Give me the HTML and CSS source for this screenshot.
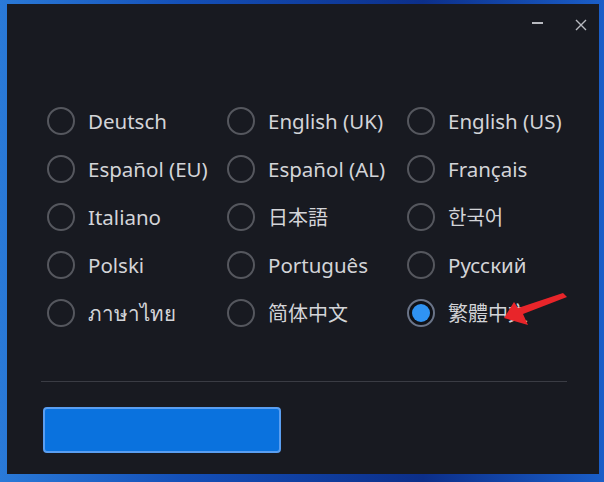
FILE: index.html
```html
<!DOCTYPE html>
<html>
<head>
<meta charset="utf-8">
<link rel="stylesheet" href="styles.css">
</head>
<body>
<div class="window">
  <div class="titlebar">
    <span class="minimize"></span>
    <svg class="close" width="12" height="12" viewBox="0 0 12 12"><path d="M1 1L11 11M11 1L1 11" stroke="#b8bac0" stroke-width="1.4"/></svg>
  </div>
  <div class="langs">
    <label class="opt"><span class="radio"></span><span class="txt">Deutsch</span></label>
    <label class="opt"><span class="radio"></span><span class="txt">English (UK)</span></label>
    <label class="opt"><span class="radio"></span><span class="txt">English (US)</span></label>
    <label class="opt"><span class="radio"></span><span class="txt">Español (EU)</span></label>
    <label class="opt"><span class="radio"></span><span class="txt">Español (AL)</span></label>
    <label class="opt"><span class="radio"></span><span class="txt">Français</span></label>
    <label class="opt"><span class="radio"></span><span class="txt">Italiano</span></label>
    <label class="opt"><span class="radio"></span><span class="txt jp">日本語</span></label>
    <label class="opt"><span class="radio"></span><span class="txt kr">한국어</span></label>
    <label class="opt"><span class="radio"></span><span class="txt">Polski</span></label>
    <label class="opt"><span class="radio"></span><span class="txt">Português</span></label>
    <label class="opt"><span class="radio"></span><span class="txt">Русский</span></label>
    <label class="opt"><span class="radio"></span><span class="txt">ภาษาไทย</span></label>
    <label class="opt"><span class="radio"></span><span class="txt sc">简体中文</span></label>
    <label class="opt"><span class="radio checked"></span><span class="txt tc">繁體中文</span></label>
  </div>
  <div class="sep"></div>
  <div class="btn"></div>
  <svg class="arrow" width="70" height="36" viewBox="500 290 70 36"><path d="M504 318 L514 302 L518 308 L563 293 L567 297 L523 314 L528 325 Z" fill="#e8252a"/></svg>
</div>
</body>
</html>
```

FILE: styles.css
```css
html, body {
  margin: 0;
  padding: 0;
}
body {
  width: 604px;
  height: 482px;
  background: linear-gradient(90deg, #2a7ad8 0%, #1450b8 30%, #0c2f8a 70%, #1a5ec8 100%);
  overflow: hidden;
  font-family: "Noto Sans", "Open Sans", sans-serif;
}
.window {
  position: relative;
  margin: 4px 5px 0 7px;
  width: 592px;
  height: 470px;
  background: #181a21;
  box-sizing: border-box;
  padding: 0 0 0 34px;
}
.titlebar {
  height: 93px;
  display: flex;
  justify-content: flex-end;
  align-items: flex-start;
  gap: 32px;
  padding-right: 12px;
  padding-top: 15px;
  box-sizing: border-box;
}
.minimize {
  display: block;
  width: 11px;
  height: 2px;
  background: #b8bac0;
  margin-top: 3px;
}
.close {
  display: block;
}
.langs {
  display: grid;
  grid-template-columns: 180px 180px 180px;
  grid-auto-rows: 48px;
  padding-left: 6px;
}
.opt {
  display: flex;
  align-items: center;
  gap: 13px;
  color: #d3d4d8;
  font-size: 20.5px;
  white-space: nowrap;
}
.radio {
  width: 28px;
  height: 28px;
  border: 2px solid #55575e;
  border-radius: 50%;
  box-sizing: border-box;
  flex: none;
  position: relative;
}
.radio.checked {
  border-color: #6a7488;
  background: #0f1117;
}
.radio.checked::after {
  content: "";
  position: absolute;
  left: 3px;
  top: 3px;
  width: 18px;
  height: 18px;
  border-radius: 50%;
  background: #2f93f3;
}
.txt { line-height: 1; position: relative; top: 0; }
.jp { font-family: "Noto Sans CJK JP", sans-serif; font-size: 20px; }
.kr { font-family: "Noto Sans CJK KR", sans-serif; font-size: 20px; }
.sc { font-family: "Noto Sans CJK SC", sans-serif; font-size: 20px; }
.tc { font-family: "Noto Sans CJK TC", sans-serif; font-size: 20px; }
.sep {
  margin-top: 44px;
  width: 526px;
  height: 1px;
  background: #3a3c44;
}
.btn {
  margin-top: 25px;
  margin-left: 2px;
  width: 238px;
  height: 46px;
  box-sizing: border-box;
  background: #0a72de;
  border: 2px solid #5a9ef0;
  border-radius: 4px;
}
.arrow {
  position: absolute;
  left: 493px;
  top: 286px;
}
```
